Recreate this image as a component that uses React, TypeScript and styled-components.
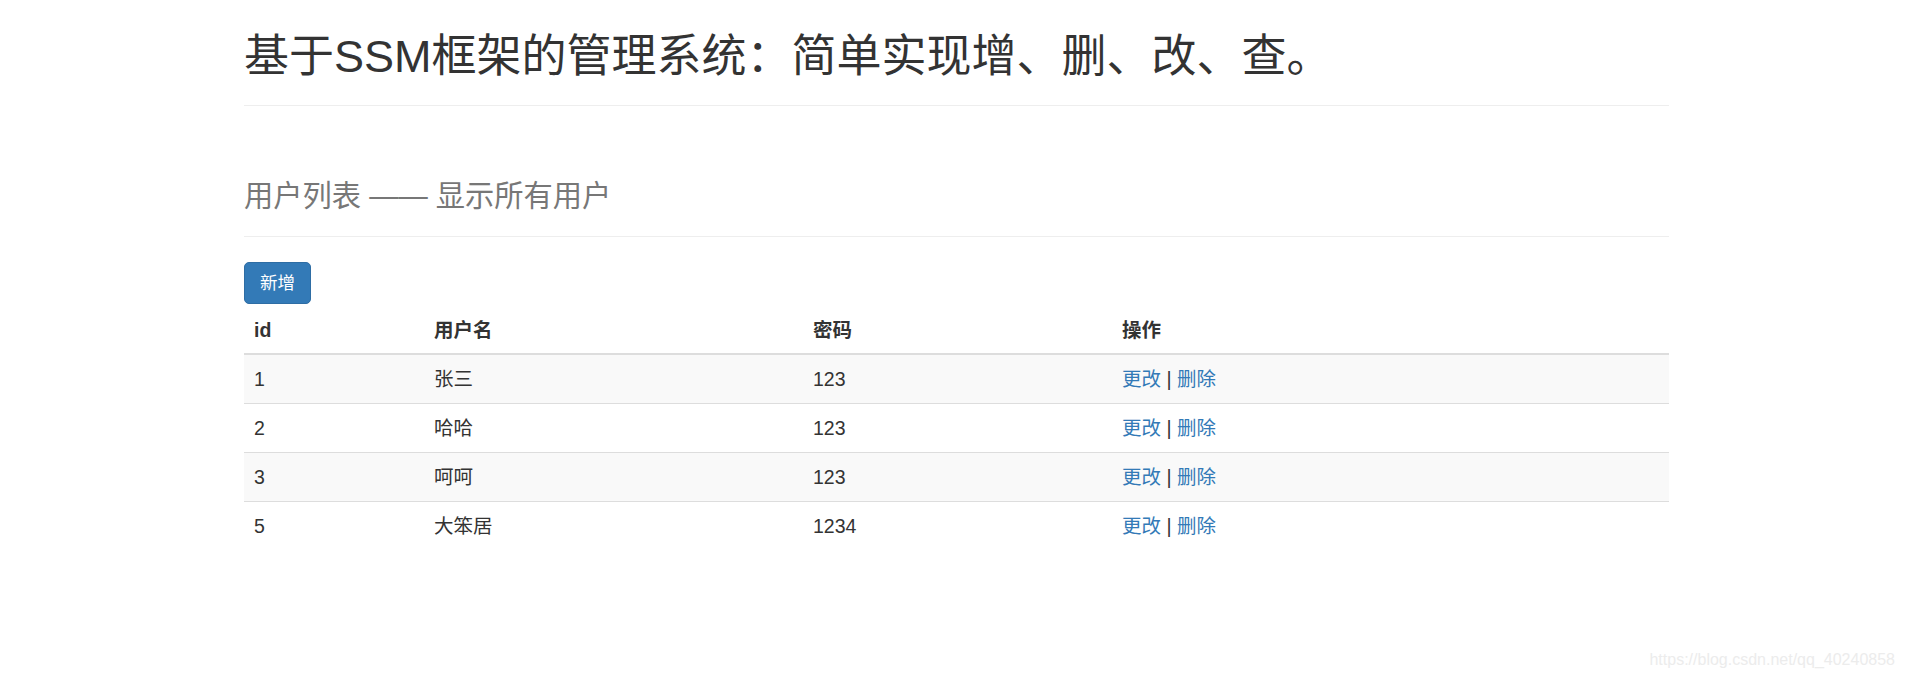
// 用户列表页 - SSM 管理系统的用户增删改查列表
import React from "react";
import styled, { createGlobalStyle } from "styled-components";

const GlobalStyle = createGlobalStyle`
  html, body {
    margin: 0;
    padding: 0;
    background: #ffffff;
  }

  body {
    font-family: "Liberation Sans", "Noto Sans CJK SC", Arial, sans-serif;
    font-size: 17.5px;
    line-height: 25px;
    color: #333333;
    min-height: 679px;
  }

  * {
    box-sizing: border-box;
  }
`;

const Page = styled.div`
  position: relative;
  min-height: 679px;
  overflow: hidden;
`;

const Container = styled.div`
  width: 1425px;
  margin-left: 244px;
  padding-top: 32px;
`;

const PageHeader = styled.div<{ $top?: number }>`
  margin-top: ${(p) => p.$top ?? 0}px;
  margin-bottom: 25px;
  padding-bottom: 11.25px;
  border-bottom: 1px solid #eeeeee;
`;

const Title = styled.h1`
  margin: 0 0 12.5px 0;
  font-size: 45px;
  font-weight: 400;
  line-height: 49.5px;
  color: #333333;
`;

const SubTitle = styled.h1`
  margin: 0 0 12.5px 0;
  font-size: 29.25px;
  font-weight: 400;
  line-height: 32.2px;
  color: #777777;
`;

const PrimaryButton = styled.button`
  display: inline-block;
  padding: 7.5px 15px;
  font-family: inherit;
  font-size: 17.5px;
  line-height: 25px;
  color: #ffffff;
  background: #337ab7;
  border: 1px solid #2e6da4;
  border-radius: 5px;
  cursor: pointer;

  &:hover {
    background: #286090;
    border-color: #204d74;
  }
`;

const Table = styled.table`
  width: 100%;
  margin-top: 3.5px;
  border-collapse: collapse;
  border-spacing: 0;
  font-size: 19.5px;
`;

const Th = styled.th<{ $width?: number }>`
  width: ${(p) => (p.$width ? `${p.$width}px` : "auto")};
  padding: 10px;
  text-align: left;
  vertical-align: bottom;
  font-weight: 700;
  line-height: 25px;
  border-bottom: 2px solid #dddddd;
`;

const Row = styled.tr<{ $striped: boolean }>`
  background: ${(p) => (p.$striped ? "#f9f9f9" : "transparent")};
`;

const Td = styled.td`
  padding: 10px;
  line-height: 28px;
  vertical-align: top;
  border-top: 1px solid #dddddd;
`;

const ActionLink = styled.a`
  color: #337ab7;
  text-decoration: none;

  &:hover {
    color: #23527c;
    text-decoration: underline;
  }
`;

const Watermark = styled.div`
  position: absolute;
  right: 10px;
  top: 650px;
  font-family: "Liberation Sans", Arial, sans-serif;
  font-size: 16px;
  line-height: 20px;
  color: #ececec;
  pointer-events: none;
`;

const users = [
  { id: 1, name: "张三", password: "123" },
  { id: 2, name: "哈哈", password: "123" },
  { id: 3, name: "呵呵", password: "123" },
  { id: 5, name: "大笨居", password: "1234" },
];

const App = () => {
  return (
    <Page>
      <GlobalStyle />
      <Container>
        <PageHeader>
          <Title>基于SSM框架的管理系统：简单实现增、删、改、查。</Title>
        </PageHeader>

        <PageHeader $top={74}>
          <SubTitle>用户列表 —— 显示所有用户</SubTitle>
        </PageHeader>

        <PrimaryButton type="button">新增</PrimaryButton>

        <Table>
          <thead>
            <tr>
              <Th $width={180}>id</Th>
              <Th $width={379}>用户名</Th>
              <Th $width={309}>密码</Th>
              <Th>操作</Th>
            </tr>
          </thead>
          <tbody>
            {users.map((u, i) => (
              <Row key={u.id} $striped={i % 2 === 0}>
                <Td>{u.id}</Td>
                <Td>{u.name}</Td>
                <Td>{u.password}</Td>
                <Td>
                  <ActionLink href="#">更改</ActionLink> |{" "}
                  <ActionLink href="#">删除</ActionLink>
                </Td>
              </Row>
            ))}
          </tbody>
        </Table>
      </Container>
      <Watermark>https://blog.csdn.net/qq_40240858</Watermark>
    </Page>
  );
};

export default App;
